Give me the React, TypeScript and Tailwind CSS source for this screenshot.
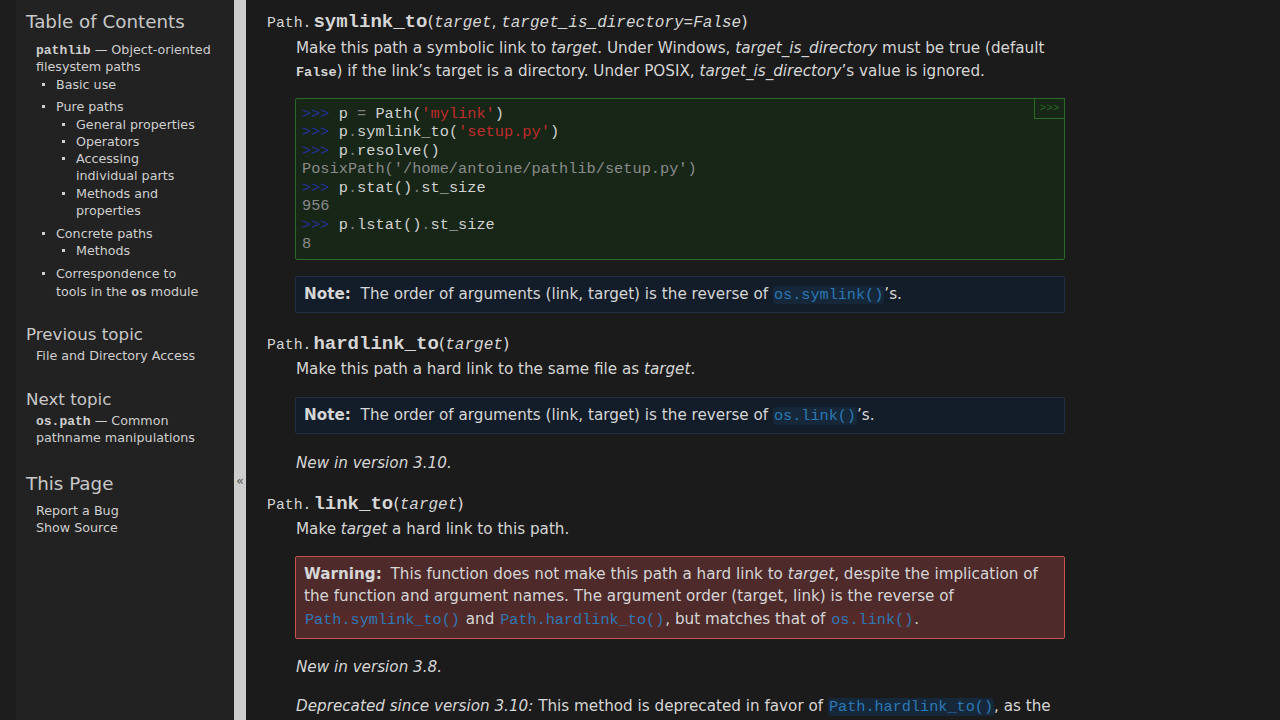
const mono = "font-['Liberation_Mono',monospace]";

function Bullet({ children }: { children: React.ReactNode }) {
  return (
    <li className="flex">
      <span className="mt-[7px] mr-[11px] size-[3px] shrink-0 bg-[#cfcfcf]" />
      <div className="min-w-0 flex-1">{children}</div>
    </li>
  );
}

function Sidebar() {
  return (
    <div className="w-[218px] shrink-0 bg-[#222222] pl-[10px] pt-[9px] text-[12.7px] leading-[17.2px] text-[#cfcfcf]">
      <h3 className="h-[26px] text-[18.3px] leading-[26px] text-[#c8c8c8]">Table of Contents</h3>
      <ul className="mt-[5.5px] pl-[10px]">
        <li>
          <code className={`${mono} text-[13px] font-bold leading-none`}>pathlib</code> — Object-oriented
          <br />
          filesystem paths
          <ul className="mt-[1px] pl-[6px]">
            <Bullet>Basic use</Bullet>
            <div className="h-[5px]" />
            <Bullet>
              Pure paths
              <ul className="mt-[0.5px] pl-[6px]">
                <Bullet>General properties</Bullet>
                <Bullet>Operators</Bullet>
                <Bullet>
                  Accessing
                  <br />
                  individual parts
                </Bullet>
                <Bullet>
                  Methods and
                  <br />
                  properties
                </Bullet>
              </ul>
            </Bullet>
            <div className="h-[6px]" />
            <Bullet>
              Concrete paths
              <ul className="pl-[6px]">
                <Bullet>Methods</Bullet>
              </ul>
            </Bullet>
            <div className="h-[6px]" />
            <Bullet>
              Correspondence to
              <br />
              tools in the <code className={`${mono} text-[13px] font-bold leading-none`}>os</code> module
            </Bullet>
          </ul>
        </li>
      </ul>

      <h4 className="mt-[21px] h-[26px] text-[16.7px] leading-[26px] text-[#c8c8c8]">Previous topic</h4>
      <p className="pl-[10px]">File and Directory Access</p>

      <h4 className="mt-[21.8px] h-[26px] text-[16.7px] leading-[26px] text-[#c8c8c8]">Next topic</h4>
      <p className="pl-[10px]">
        <code className={`${mono} text-[13px] font-bold leading-none`}>os.path</code> — Common
        <br />
        pathname manipulations
      </p>

      <h3 className="mt-[24.4px] h-[26px] text-[18.3px] leading-[26px] text-[#c8c8c8]">This Page</h3>
      <ul className="mt-[5px] pl-[10px]">
        <li>Report a Bug</li>
        <li>Show Source</li>
      </ul>
    </div>
  );
}

function Sig({ name, args }: { name: string; args: React.ReactNode }) {
  return (
    <div className="h-[26px] whitespace-nowrap leading-[26px] text-[#d6d6d6]">
      <span className={`${mono} text-[14.8px]`}>Path.</span>
      <span className={`${mono} ml-[2px] text-[19px] font-bold`}>{name}</span>
      <span className="text-[16.5px]">(</span>
      {args}
      <span className="text-[16.5px]">)</span>
    </div>
  );
}

function Arg({ children }: { children: React.ReactNode }) {
  return <em className={`${mono} text-[16px]`}>{children}</em>;
}

function Code({ children, warn }: { children: React.ReactNode; warn?: boolean }) {
  return (
    <code
      className={`${mono} rounded-[3px] px-[1px] text-[15.2px] leading-none text-[#2b79b5] ${warn ? 'bg-[#572a2a]' : 'bg-[#16273a]'}`}
    >
      {children}
    </code>
  );
}

const P = () => <span className="text-[#24319c]">&gt;&gt;&gt; </span>;
const Op = ({ c }: { c: string }) => <span className="text-[#7d7d7d]">{c}</span>;
const Str = ({ c }: { c: string }) => <span className="text-[#c02b2b]">{c}</span>;
const Out = ({ c }: { c: string }) => <span className="text-[#8a8a8a]">{c}</span>;

function CodeBlock() {
  return (
    <div className="relative mt-[15.5px] rounded-[2px] border border-[#2a6a25] bg-[#172617] px-[6px] py-[5.5px]">
      <pre className={`${mono} text-[15.3px] leading-[18.6px] text-[#d2d2d2]`}>
        <P />p <Op c="=" /> Path(<Str c="'mylink'" />)
        {'\n'}
        <P />p<Op c="." />symlink_to(<Str c="'setup.py'" />)
        {'\n'}
        <P />p<Op c="." />resolve()
        {'\n'}
        <Out c="PosixPath('/home/antoine/pathlib/setup.py')" />
        {'\n'}
        <P />p<Op c="." />stat()<Op c="." />st_size
        {'\n'}
        <Out c="956" />
        {'\n'}
        <P />p<Op c="." />lstat()<Op c="." />st_size
        {'\n'}
        <Out c="8" />
      </pre>
      <span
        className={`${mono} absolute right-[-1px] top-[-1px] h-[21px] w-[31px] border border-[#2a6a25] text-center text-[11px] leading-[18px] text-[#2a6a25]`}
      >
        &gt;&gt;&gt;
      </span>
    </div>
  );
}

function Note({ children, className }: { children: React.ReactNode; className: string }) {
  return (
    <div className={`${className} rounded-[2px] border border-[#1f3045] bg-[#131d29] px-[8px] py-[6px] leading-[23px]`}>
      <span className="mr-[5px] font-bold">Note:</span> {children}
    </div>
  );
}

export default function App() {
  return (
    <div className="flex h-[720px] w-[1280px] overflow-hidden bg-[#1b1b1b] font-['DejaVu_Sans',sans-serif]">
      <div className="w-[16px] shrink-0 bg-[#1d1d1d]" />
      <Sidebar />
      <div className="w-[12px] shrink-0 bg-[#cdcdcd] pt-[471px] text-center text-[13px] leading-[20px] text-[#555555]">
        «
      </div>

      <main className="min-w-0 flex-1 pl-[21px] pt-[9px] text-[15.2px] text-[#d6d6d6]">
        <Sig
          name="symlink_to"
          args={
            <>
              <Arg>target</Arg>, <Arg>target_is_directory=False</Arg>
            </>
          }
        />
        <div className="ml-[28px] w-[770px]">
          <p className="mt-[1.5px] pl-[1px] leading-[23px]">
            Make this path a symbolic link to <em>target</em>. Under Windows, <em>target_is_directory</em> must
            be true (default <code className={`${mono} text-[13.5px] font-bold leading-none`}>False</code>) if
            the link’s target is a directory. Under POSIX, <em>target_is_directory</em>’s value is ignored.
          </p>
          <CodeBlock />
          <Note className="mt-[16px]">
            The order of arguments (link, target) is the reverse of <Code>os.symlink()</Code>’s.
          </Note>
        </div>

        <div className="mt-[18px]">
          <Sig name="hardlink_to" args={<Arg>target</Arg>} />
        </div>
        <div className="ml-[28px] w-[770px]">
          <p className="mt-[1.5px] pl-[1px] leading-[23px]">
            Make this path a hard link to the same file as <em>target</em>.
          </p>
          <Note className="mt-[16px]">
            The order of arguments (link, target) is the reverse of <Code>os.link()</Code>’s.
          </Note>
          <p className="mt-[17.5px] pl-[1px] leading-[23px]">
            <em>New in version 3.10.</em>
          </p>
        </div>

        <div className="mt-[16px]">
          <Sig name="link_to" args={<Arg>target</Arg>} />
        </div>
        <div className="ml-[28px] w-[770px]">
          <p className="mt-[1.5px] pl-[1px] leading-[23px]">
            Make <em>target</em> a hard link to this path.
          </p>
          <div className="mt-[14.5px] rounded-[2px] border border-[#c65252] bg-[#4e2a2b] pb-[7.5px] pl-[8px] pr-[6px] pt-[6px] leading-[22.5px]">
            <span className="mr-[4px] font-bold">Warning:</span> This function does not make this path a hard link
            to <em>target</em>, despite the implication of the function and argument names. The argument order
            (target, link) is the reverse of <Code warn>Path.symlink_to()</Code> and{' '}
            <Code warn>Path.hardlink_to()</Code>, but matches that of <Code warn>os.link()</Code>.
          </div>
          <p className="mt-[17px] pl-[1px] leading-[23px]">
            <em>New in version 3.8.</em>
          </p>
          <p className="mt-[16px] pl-[1px] leading-[23px]">
            <em>Deprecated since version 3.10:</em> This method is deprecated in favor of{' '}
            <Code>Path.hardlink_to()</Code>, as the argument order of <Code>Path.link_to()</Code> does not match
            that of <Code>Path.symlink_to()</Code>.
          </p>
        </div>
      </main>
    </div>
  );
}
